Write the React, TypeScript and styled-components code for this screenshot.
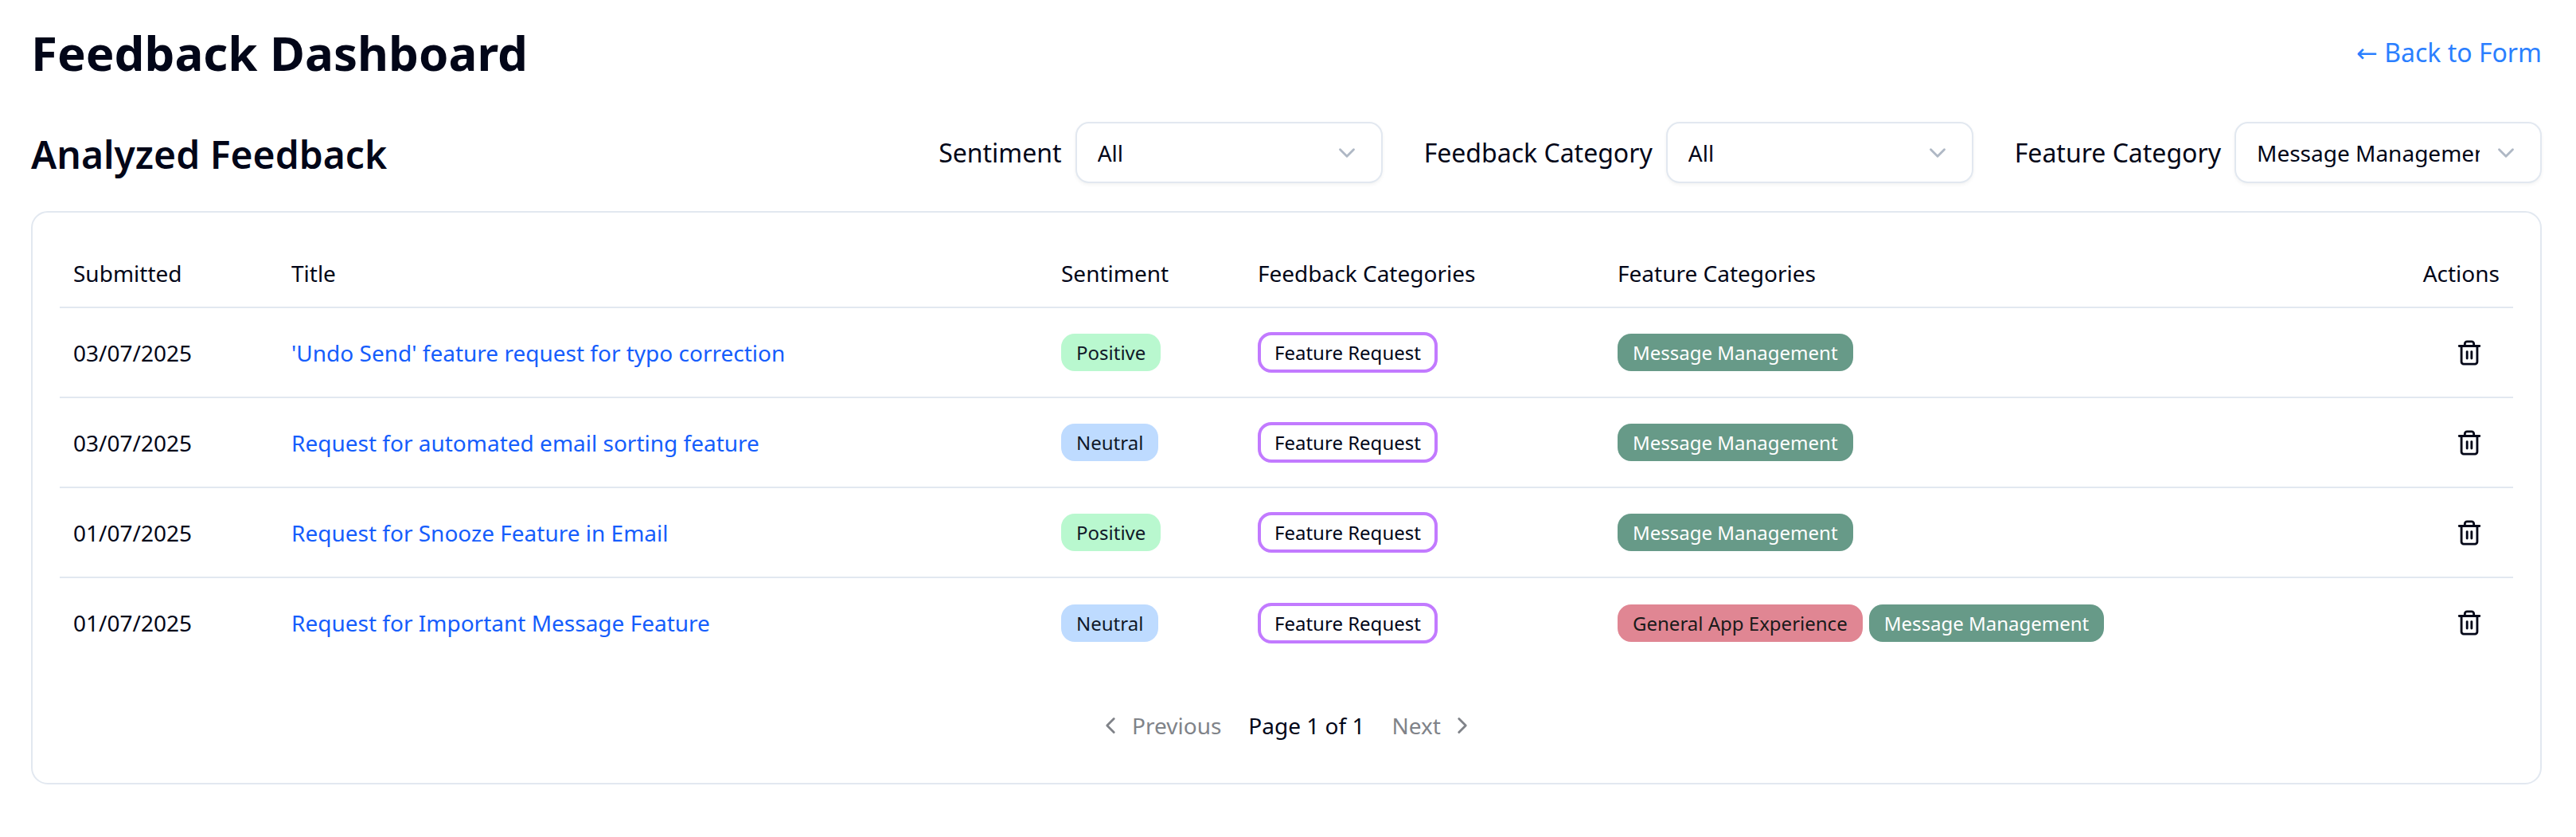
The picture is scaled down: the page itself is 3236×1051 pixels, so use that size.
import React, { useId, useState } from "react";
import styled, { createGlobalStyle } from "styled-components";
import { ChevronDown, ChevronLeft, ChevronRight, Trash2 } from "lucide-react";

const colors = {
  text: "#020618",
  border: "#e2e8f0",
  link: "#155dfc",
  backLink: "#2b7fff",
  muted: "#808389",
  chevron: "#afb8c5",
};

const GlobalStyle = createGlobalStyle`
  *, *::before, *::after { box-sizing: border-box; }
  body {
    margin: 0;
    background: #ffffff;
    color: ${colors.text};
    font-family: "Segoe UI", "Noto Sans", "Open Sans", sans-serif;
    font-size: 28px;
    line-height: 40px;
  }
`;

const Page = styled.main`
  display: flex;
  flex-direction: column;
  gap: 35px;
  padding: 28px 43px 34px 39px;
`;

const PageHeader = styled.header`
  display: flex;
  align-items: center;
  justify-content: space-between;
  margin-bottom: 14px;
`;

const PageTitle = styled.h1`
  margin: 0;
  font-size: 60px;
  line-height: 76px;
  font-weight: 700;
`;

const BackLink = styled.a`
  color: ${colors.backLink};
  font-size: 32px;
  text-decoration: none;
`;

const Arrow = styled.span`
  font-family: "DejaVu Sans", sans-serif;
`;

const Toolbar = styled.section`
  display: flex;
  align-items: flex-end;
  justify-content: space-between;
`;

const SectionTitle = styled.h2`
  margin: 0;
  font-size: 48px;
  line-height: 72px;
  font-weight: 600;
`;

const Filters = styled.div`
  display: flex;
  align-items: center;
  gap: 52px;
`;

const FilterField = styled.div`
  display: flex;
  align-items: center;
  gap: 17px;
`;

const FilterLabel = styled.label`
  font-size: 32px;
  white-space: nowrap;
`;

const SelectBox = styled.div`
  position: relative;
  width: 386px;

  svg {
    position: absolute;
    top: 22px;
    right: 28px;
    color: ${colors.chevron};
    pointer-events: none;
  }
`;

const Select = styled.select`
  display: block;
  width: 100%;
  height: 77px;
  padding: 0 76px 0 26px;
  appearance: none;
  border: 2px solid ${colors.border};
  border-radius: 17px;
  background: #ffffff;
  box-shadow: 0 2px 4px rgba(0, 0, 0, 0.05);
  color: inherit;
  font: inherit;
`;

const Card = styled.section`
  display: flex;
  flex-direction: column;
  gap: 35px;
  padding: 34px;
  border: 2px solid ${colors.border};
  border-radius: 21px;
`;

const Table = styled.table`
  width: 100%;
  table-layout: fixed;
  border-collapse: collapse;
`;

const Column = styled.col<{ $width?: number }>`
  width: ${(p) => (p.$width ? `${p.$width}px` : "auto")};
`;

const HeadCell = styled.th<{ $end?: boolean }>`
  height: 85px;
  padding: 0 17px;
  font-weight: 400;
  text-align: ${(p) => (p.$end ? "right" : "left")};
  white-space: nowrap;
  border-bottom: 2px solid ${colors.border};
`;

const Row = styled.tr`
  &:not(:last-child) td {
    border-bottom: 2px solid ${colors.border};
  }
`;

const Cell = styled.td`
  height: 113px;
  padding: 0 17px;
`;

const TitleLink = styled.a`
  color: ${colors.link};
  text-decoration: none;
`;

const TagList = styled.div`
  display: flex;
  flex-wrap: wrap;
  align-items: center;
  gap: 8px;
`;

type Tone = "Positive" | "Neutral" | "Feature Request" | "Message Management" | "General App Experience";

const tones: Record<Tone, { background: string; color: string; border?: string }> = {
  Positive: { background: "#b9f8cf", color: "#101828" },
  Neutral: { background: "#bedbff", color: "#101828" },
  "Feature Request": { background: "#ffffff", color: colors.text, border: "#c27aff" },
  "Message Management": { background: "#679a88", color: "#ffffff" },
  "General App Experience": { background: "#e08693", color: "#1a1a1a" },
};

const Tag = styled.span<{ $tone: Tone }>`
  display: inline-block;
  padding: ${(p) => (tones[p.$tone].border ? "4px 17px" : "6px 19px")};
  border: ${(p) => (tones[p.$tone].border ? `4px solid ${tones[p.$tone].border}` : "0")};
  border-radius: 17px;
  background: ${(p) => tones[p.$tone].background};
  color: ${(p) => tones[p.$tone].color};
  font-size: 24px;
  line-height: 35px;
  white-space: nowrap;
`;

const Actions = styled.div`
  display: flex;
  justify-content: flex-end;
`;

const IconButton = styled.button`
  display: flex;
  align-items: center;
  justify-content: center;
  width: 76px;
  height: 76px;
  padding: 0;
  border: 0;
  background: transparent;
  color: inherit;
`;

const Pagination = styled.nav`
  display: flex;
  align-items: center;
  justify-content: center;
  gap: 17px;
`;

const PageButton = styled.button`
  display: flex;
  align-items: center;
  gap: 10px;
  height: 76px;
  padding: 0 17px;
  border: 0;
  background: transparent;
  color: ${colors.muted};
  font: inherit;
`;

interface FilterProps {
  label: string;
  initial: string;
  options: string[];
}

function Filter({ label, initial, options }: FilterProps) {
  const id = useId();
  const [value, setValue] = useState(initial);
  return (
    <FilterField>
      <FilterLabel htmlFor={id}>{label}</FilterLabel>
      <SelectBox>
        <Select id={id} value={value} onChange={(e) => setValue(e.target.value)}>
          {options.map((option) => (
            <option key={option}>{option}</option>
          ))}
        </Select>
        <ChevronDown size={34} aria-hidden />
      </SelectBox>
    </FilterField>
  );
}

interface Feedback {
  submitted: string;
  title: string;
  sentiment: Tone;
  features: Tone[];
}

const feedback: Feedback[] = [
  {
    submitted: "03/07/2025",
    title: "'Undo Send' feature request for typo correction",
    sentiment: "Positive",
    features: ["Message Management"],
  },
  {
    submitted: "03/07/2025",
    title: "Request for automated email sorting feature",
    sentiment: "Neutral",
    features: ["Message Management"],
  },
  {
    submitted: "01/07/2025",
    title: "Request for Snooze Feature in Email",
    sentiment: "Positive",
    features: ["Message Management"],
  },
  {
    submitted: "01/07/2025",
    title: "Request for Important Message Feature",
    sentiment: "Neutral",
    features: ["General App Experience", "Message Management"],
  },
];

export default function App() {
  return (
    <>
      <GlobalStyle />
      <Page>
        <PageHeader>
          <PageTitle>Feedback Dashboard</PageTitle>
          <BackLink href="#form">
            <Arrow>←</Arrow> Back to Form
          </BackLink>
        </PageHeader>

        <Toolbar>
          <SectionTitle>Analyzed Feedback</SectionTitle>
          <Filters>
            <Filter label="Sentiment" initial="All" options={["All", "Positive", "Neutral"]} />
            <Filter label="Feedback Category" initial="All" options={["All", "Feature Request"]} />
            <Filter
              label="Feature Category"
              initial="Message Management"
              options={["All", "General App Experience", "Message Management"]}
            />
          </Filters>
        </Toolbar>

        <Card>
          <Table>
            <colgroup>
              <Column $width={274} />
              <Column />
              <Column $width={247} />
              <Column $width={452} />
              <Column $width={992} />
              <Column $width={150} />
            </colgroup>
            <thead>
              <tr>
                <HeadCell>Submitted</HeadCell>
                <HeadCell>Title</HeadCell>
                <HeadCell>Sentiment</HeadCell>
                <HeadCell>Feedback Categories</HeadCell>
                <HeadCell>Feature Categories</HeadCell>
                <HeadCell $end>Actions</HeadCell>
              </tr>
            </thead>
            <tbody>
              {feedback.map((item) => (
                <Row key={item.title}>
                  <Cell>{item.submitted}</Cell>
                  <Cell>
                    <TitleLink href="#feedback">{item.title}</TitleLink>
                  </Cell>
                  <Cell>
                    <TagList>
                      <Tag $tone={item.sentiment}>{item.sentiment}</Tag>
                    </TagList>
                  </Cell>
                  <Cell>
                    <TagList>
                      <Tag $tone="Feature Request">Feature Request</Tag>
                    </TagList>
                  </Cell>
                  <Cell>
                    <TagList>
                      {item.features.map((name) => (
                        <Tag key={name} $tone={name}>
                          {name}
                        </Tag>
                      ))}
                    </TagList>
                  </Cell>
                  <Cell>
                    <Actions>
                      <IconButton type="button" aria-label={`Delete ${item.title}`}>
                        <Trash2 size={34} aria-hidden />
                      </IconButton>
                    </Actions>
                  </Cell>
                </Row>
              ))}
            </tbody>
          </Table>

          <Pagination aria-label="Pages">
            <PageButton type="button" disabled>
              <ChevronLeft size={34} aria-hidden />
              Previous
            </PageButton>
            <span>Page 1 of 1</span>
            <PageButton type="button" disabled>
              Next
              <ChevronRight size={34} aria-hidden />
            </PageButton>
          </Pagination>
        </Card>
      </Page>
    </>
  );
}
